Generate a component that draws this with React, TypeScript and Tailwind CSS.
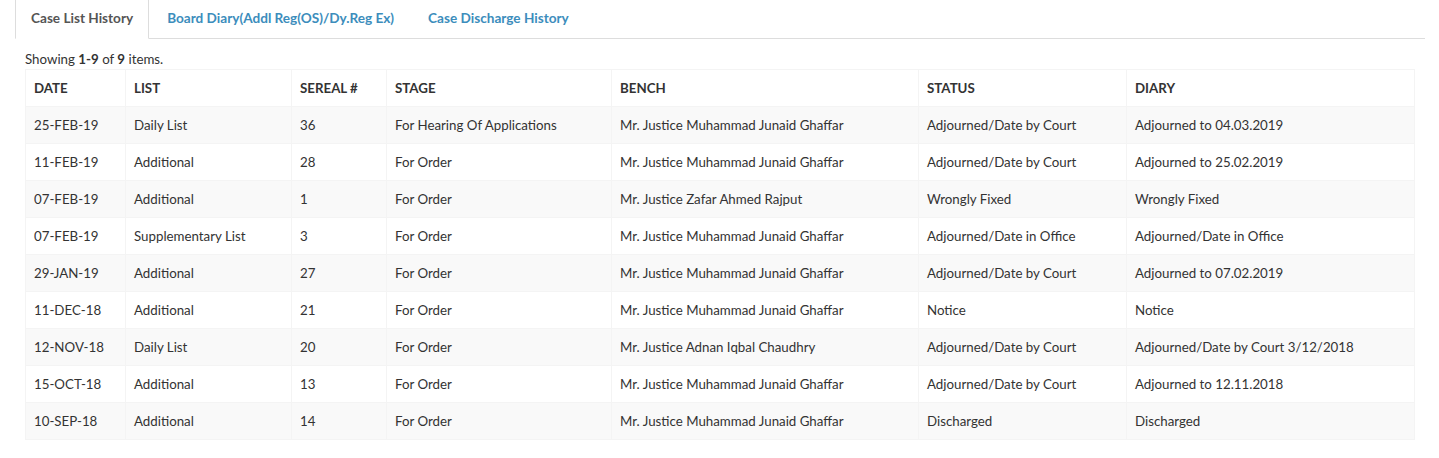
const rows = [
	['25-FEB-19', 'Daily List', '36', 'For Hearing Of Applications', 'Mr. Justice Muhammad Junaid Ghaffar', 'Adjourned/Date by Court', 'Adjourned to 04.03.2019'],
	['11-FEB-19', 'Additional', '28', 'For Order', 'Mr. Justice Muhammad Junaid Ghaffar', 'Adjourned/Date by Court', 'Adjourned to 25.02.2019'],
	['07-FEB-19', 'Additional', '1', 'For Order', 'Mr. Justice Zafar Ahmed Rajput', 'Wrongly Fixed', 'Wrongly Fixed'],
	['07-FEB-19', 'Supplementary List', '3', 'For Order', 'Mr. Justice Muhammad Junaid Ghaffar', 'Adjourned/Date in Office', 'Adjourned/Date in Office'],
	['29-JAN-19', 'Additional', '27', 'For Order', 'Mr. Justice Muhammad Junaid Ghaffar', 'Adjourned/Date by Court', 'Adjourned to 07.02.2019'],
	['11-DEC-18', 'Additional', '21', 'For Order', 'Mr. Justice Muhammad Junaid Ghaffar', 'Notice', 'Notice'],
	['12-NOV-18', 'Daily List', '20', 'For Order', 'Mr. Justice Adnan Iqbal Chaudhry', 'Adjourned/Date by Court', 'Adjourned/Date by Court 3/12/2018'],
	['15-OCT-18', 'Additional', '13', 'For Order', 'Mr. Justice Muhammad Junaid Ghaffar', 'Adjourned/Date by Court', 'Adjourned to 12.11.2018'],
	['10-SEP-18', 'Additional', '14', 'For Order', 'Mr. Justice Muhammad Junaid Ghaffar', 'Discharged', 'Discharged'],
];

const headers = ['DATE', 'LIST', 'SEREAL #', 'STAGE', 'BENCH', 'STATUS', 'DIARY'];
const widths = ['w-[100px]', 'w-[166px]', 'w-[95px]', 'w-[225px]', 'w-[307px]', 'w-[208px]', 'w-[288px]'];

export default function App() {
	return (
		<div className="w-[1439px] h-[458px] bg-white text-[#333] font-['Lato',sans-serif] text-[13.3px] overflow-hidden">
			{/* Tabs */}
			<div className="ml-[15px] w-[1410px] -mt-[3px] flex border-b border-[#ddd] text-[13.6px]">
				<div className="-mb-px px-[15px] py-[10px] leading-5 border border-[#ddd] border-b-white rounded-t bg-white font-bold text-[#555]">
					Case List History
				</div>
				<div className="-mb-px ml-[2px] px-[15px] py-[10px] leading-5 border border-transparent font-bold text-[#3c8dbc]">
					Board Diary(Addl Reg(OS)/Dy.Reg Ex)
				</div>
				<div className="-mb-px ml-[2px] px-[15px] py-[10px] leading-5 border border-transparent font-bold text-[#3c8dbc]">
					Case Discharge History
				</div>
			</div>

			<div className="pl-[25px] pr-[25px] pt-[10px]">
				<div className="leading-5">
					Showing <b>1-9</b> of <b>9</b> items.
				</div>
				<table className="w-[1389px] table-fixed border-collapse border border-[#f4f4f4]">
					<thead>
						<tr>
							{headers.map((h, i) => (
								<th key={h} className={`${widths[i]} h-[37px] px-2 text-left font-bold leading-5 border border-[#f4f4f4]`}>
									{h}
								</th>
							))}
						</tr>
					</thead>
					<tbody>
						{rows.map((r, i) => (
							<tr key={i} className={i % 2 === 0 ? 'bg-[#f9f9f9]' : 'bg-white'}>
								{r.map((c, j) => (
									<td key={j} className="h-[37px] px-2 leading-5 border border-[#f4f4f4] whitespace-nowrap">
										{c}
									</td>
								))}
							</tr>
						))}
					</tbody>
				</table>
			</div>
		</div>
	);
}
